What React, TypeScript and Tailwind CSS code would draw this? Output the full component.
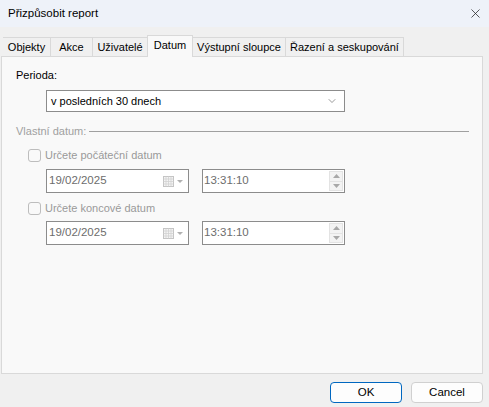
import { X, ChevronDown } from 'lucide-react';

const tabs = [
  { label: 'Objekty', w: 'w-[47px]' },
  { label: 'Akce', w: 'w-[42px]' },
  { label: 'Uživatelé', w: 'w-[55px]' },
  { label: 'Datum', w: 'w-[46px]', active: true },
  { label: 'Výstupní sloupce', w: 'w-[92px]' },
  { label: 'Řazení a seskupování', w: 'w-[119px]' },
];

function CalendarIcon() {
  return (
    <svg width="22" height="12" viewBox="0 0 22 12" className="shrink-0">
      <rect x="0.5" y="1.5" width="10" height="10" fill="#f4f4f4" stroke="#c4c4c4" />
      <path d="M3 1.5v10M5.5 1.5v10M8 1.5v10M0.5 4h10M0.5 6.5h10M0.5 9h10" stroke="#d2d2d2" strokeWidth="0.8" />
      <path d="M14 5h6l-3 3z" fill="#b0b0b0" />
    </svg>
  );
}

function Spinner() {
  return (
    <div className="flex flex-col w-[14px] h-[20px] mr-[1px] border border-[#e3e3e3] bg-[#f3f3f3]">
      <div className="flex-1 flex items-center justify-center border-b border-[#e3e3e3]">
        <svg width="7" height="4" viewBox="0 0 7 4"><path d="M0 4h7L3.5 0z" fill="#a8a8a8" /></svg>
      </div>
      <div className="flex-1 flex items-center justify-center">
        <svg width="7" height="4" viewBox="0 0 7 4"><path d="M0 0h7L3.5 4z" fill="#a8a8a8" /></svg>
      </div>
    </div>
  );
}

function DateRow() {
  return (
    <div className="flex gap-[13px] pl-[44px]">
      <div className="w-[143px] h-[24px] border border-[#8c8c8c] bg-white flex items-center pl-[2px] pr-[3px] justify-between">
        <span className="text-[#6d6d6d] text-[11.5px]">19/02/2025</span>
        <CalendarIcon />
      </div>
      <div className="w-[143px] h-[24px] border border-[#8c8c8c] bg-white flex items-center pl-[1px] justify-between">
        <span className="text-[#6d6d6d] text-[11.5px]">13:31:10</span>
        <Spinner />
      </div>
    </div>
  );
}

function CheckRow({ label }: { label: string }) {
  return (
    <div className="flex items-center gap-[4px] pl-[26px] h-[15px]">
      <div className="w-[13px] h-[13px] rounded-[3px] border border-[#bdbdbd] bg-[#f9f9f9]" />
      <span className="text-[#9a9a9a]">{label}</span>
    </div>
  );
}

export default function App() {
  return (
    <div className="w-[489px] h-[407px] bg-[#f0f0f0] flex flex-col text-[11px] text-black font-['Liberation_Sans',Arial,sans-serif]">
      {/* Title bar */}
      <div className="h-[27px] bg-[#eef2f9] flex items-center justify-between pl-[8px] pr-[6px]">
        <span className="text-[11.5px]">Přizpůsobit report</span>
        <X size={15} strokeWidth={1.2} className="text-[#222]" />
      </div>

      {/* Tabs */}
      <div className="flex items-end pl-[3px] pt-[8px] relative z-10">
        {tabs.map((t, i) =>
          t.active ? (
            <div
              key={t.label}
              className={`${t.w} h-[22px] -mb-px bg-[#f9f9f9] border border-b-0 border-[#d9d9d9] flex items-center justify-center pb-[2px]`}
            >
              {t.label}
            </div>
          ) : (
            <div
              key={t.label}
              className={`${t.w} h-[19px] bg-[#f0f0f0] border-t border-[#d9d9d9] ${i === 0 || tabs[i - 1].active ? '' : 'border-l'} ${i === tabs.length - 1 ? 'border-r' : ''} flex items-center justify-center`}
            >
              {t.label}
            </div>
          ),
        )}
      </div>

      {/* Panel */}
      <div className="ml-[1px] w-[482px] h-[318px] bg-[#f9f9f9] border border-[#d9d9d9] pt-[11px]">
        <div className="pl-[14px] h-[15px] flex items-center">Perioda:</div>
        <div className="ml-[44px] mt-[7px] w-[299px] h-[22px] border border-[#8c8c8c] bg-white flex items-center justify-between pl-[4px] pr-[6px]">
          <span>v posledních 30 dnech</span>
          <ChevronDown size={12} strokeWidth={1.2} className="text-[#555]" />
        </div>

        <div className="flex items-center mt-[12px] pl-[14px] pr-[13px] h-[15px]">
          <span className="text-[#a0a0a0] mr-[3px]">Vlastní datum:</span>
          <div className="flex-1 h-px bg-[#a0a0a0]" />
        </div>

        <div className="mt-[9px]">
          <CheckRow label="Určete počáteční datum" />
        </div>
        <div className="mt-[6px]">
          <DateRow />
        </div>
        <div className="mt-[8px]">
          <CheckRow label="Určete koncové datum" />
        </div>
        <div className="mt-[5px]">
          <DateRow />
        </div>
      </div>

      {/* Buttons */}
      <div className="flex justify-end gap-[9px] pr-[6px] mt-[8px]">
        <button className="w-[72px] h-[21px] rounded-[4px] border border-[#0067c0] bg-[#fdfdfd] text-[11.5px]">OK</button>
        <button className="w-[72px] h-[21px] rounded-[4px] border border-[#d0d0d0] bg-[#fdfdfd] text-[11.5px]">Cancel</button>
      </div>
    </div>
  );
}
